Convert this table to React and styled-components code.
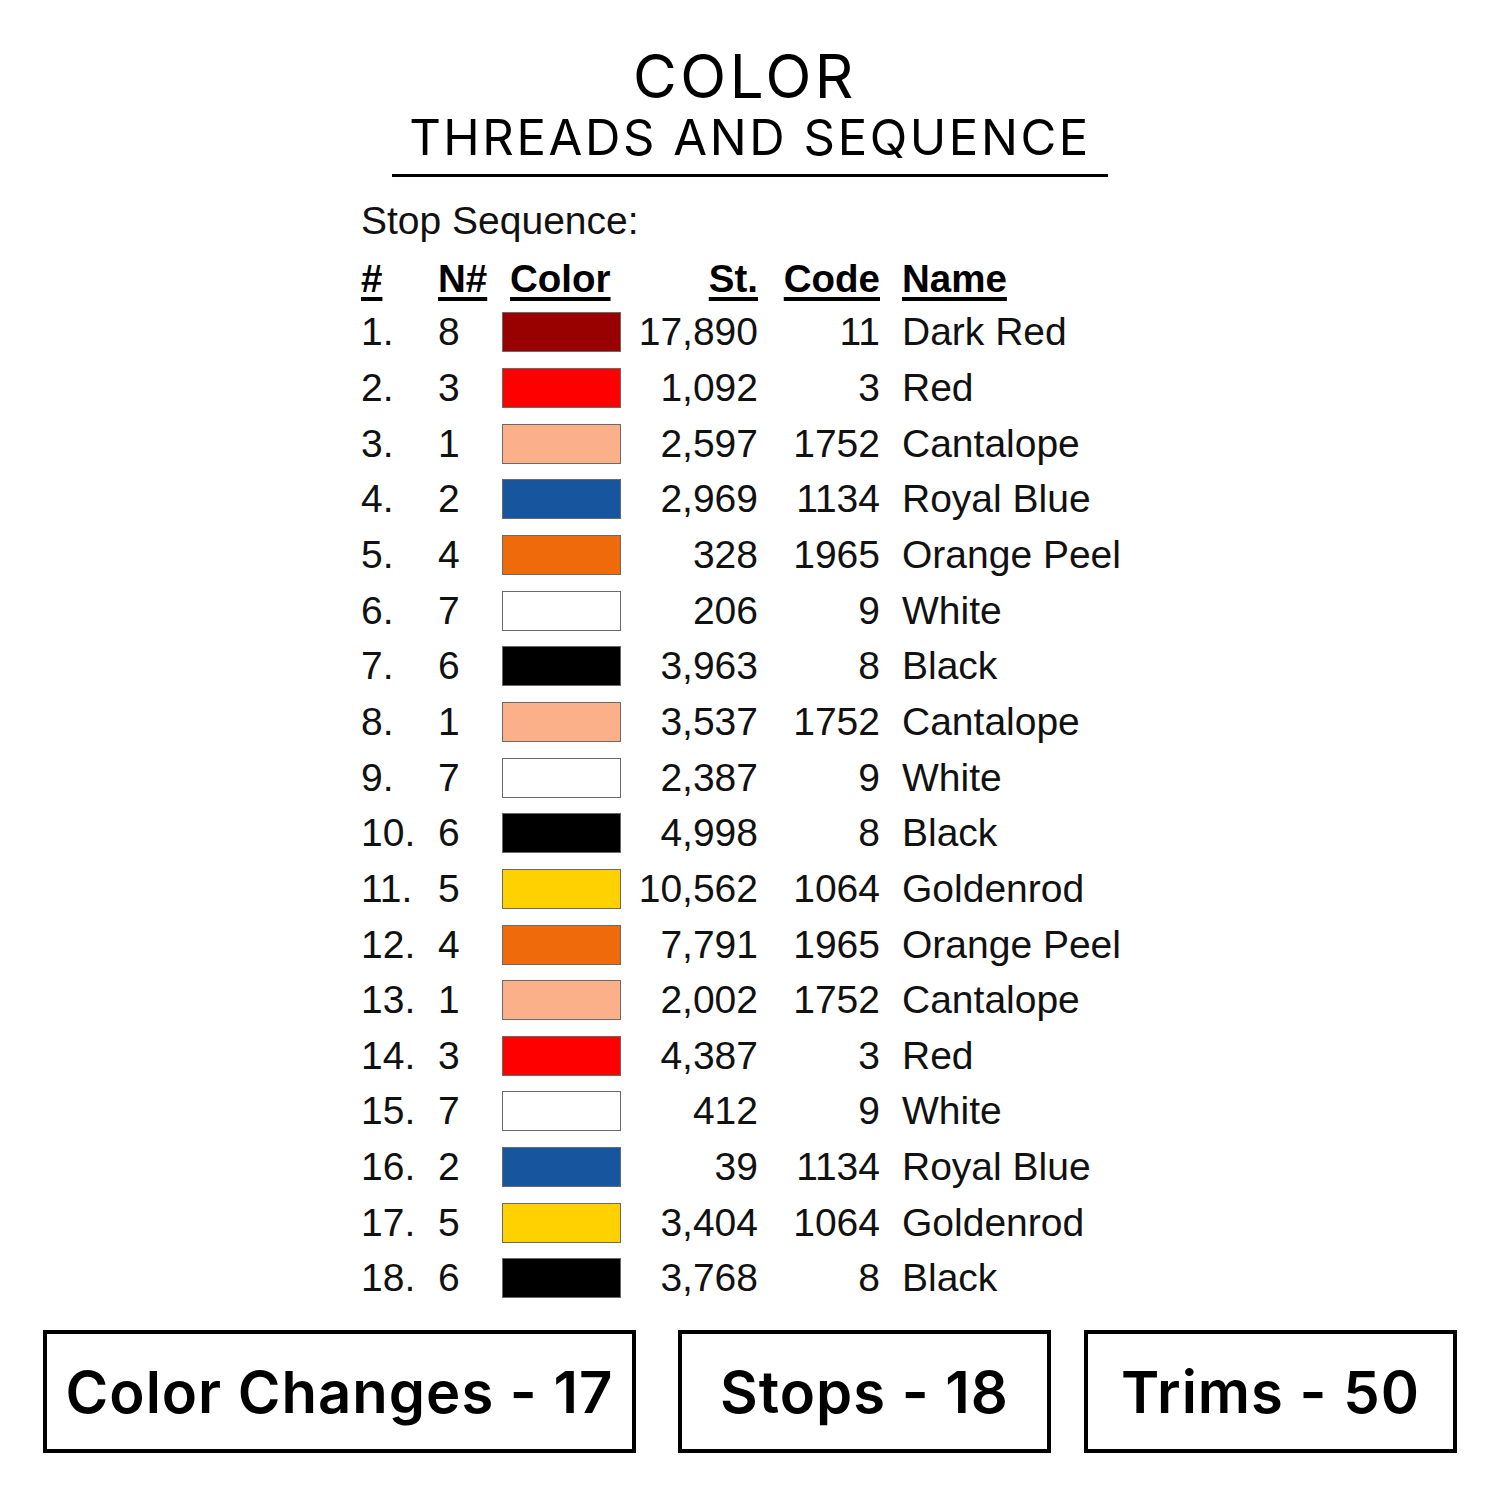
import React from 'react';
import styled, { createGlobalStyle } from 'styled-components';

const GlobalStyle = createGlobalStyle`
  html, body {
    margin: 0;
    padding: 0;
    background: #ffffff;
  }
`;

const stops = [
  { n: 8, color: '#990000', st: '17,890', code: '11', name: 'Dark Red' },
  { n: 3, color: '#ff0000', st: '1,092', code: '3', name: 'Red' },
  { n: 1, color: '#fbb08a', st: '2,597', code: '1752', name: 'Cantalope' },
  { n: 2, color: '#17559f', st: '2,969', code: '1134', name: 'Royal Blue' },
  { n: 4, color: '#ef6a0a', st: '328', code: '1965', name: 'Orange Peel' },
  { n: 7, color: '#ffffff', st: '206', code: '9', name: 'White' },
  { n: 6, color: '#000000', st: '3,963', code: '8', name: 'Black' },
  { n: 1, color: '#fbb08a', st: '3,537', code: '1752', name: 'Cantalope' },
  { n: 7, color: '#ffffff', st: '2,387', code: '9', name: 'White' },
  { n: 6, color: '#000000', st: '4,998', code: '8', name: 'Black' },
  { n: 5, color: '#ffd100', st: '10,562', code: '1064', name: 'Goldenrod' },
  { n: 4, color: '#ef6a0a', st: '7,791', code: '1965', name: 'Orange Peel' },
  { n: 1, color: '#fbb08a', st: '2,002', code: '1752', name: 'Cantalope' },
  { n: 3, color: '#ff0000', st: '4,387', code: '3', name: 'Red' },
  { n: 7, color: '#ffffff', st: '412', code: '9', name: 'White' },
  { n: 2, color: '#17559f', st: '39', code: '1134', name: 'Royal Blue' },
  { n: 5, color: '#ffd100', st: '3,404', code: '1064', name: 'Goldenrod' },
  { n: 6, color: '#000000', st: '3,768', code: '8', name: 'Black' },
];

const totals = [
  { label: 'Color Changes - 17', width: 593, gap: 0 },
  { label: 'Stops - 18', width: 373, gap: 42 },
  { label: 'Trims - 50', width: 373, gap: 33 },
];

export default function App() {
  return (
    <Page>
      <GlobalStyle />
      <Heading>
        <Title>COLOR</Title>
        <Subtitle>THREADS AND SEQUENCE</Subtitle>
      </Heading>

      <Sheet>
        <Caption>Stop Sequence:</Caption>
        <Table>
          <Head>#</Head>
          <Head>N#</Head>
          <Head $pad="8px">Color</Head>
          <Head $align="right">St.</Head>
          <Head $align="right">Code</Head>
          <Head $pad="22px">Name</Head>
          {stops.map((s, i) => (
            <React.Fragment key={i}>
              <Cell>{i + 1}.</Cell>
              <Cell>{s.n}</Cell>
              <Cell>
                <Swatch $color={s.color} />
              </Cell>
              <Cell $align="right">{s.st}</Cell>
              <Cell $align="right">{s.code}</Cell>
              <Cell $pad="22px">{s.name}</Cell>
            </React.Fragment>
          ))}
        </Table>
      </Sheet>

      <Totals>
        {totals.map((t) => (
          <TotalBox key={t.label} $width={t.width} $gap={t.gap}>
            {t.label}
          </TotalBox>
        ))}
      </Totals>
    </Page>
  );
}

const Page = styled.div`
  width: 1500px;
  height: 1500px;
  display: flex;
  flex-direction: column;
  background: #ffffff;
  color: #000000;
  box-sizing: border-box;
  padding-top: 44px;
`;

const Heading = styled.div`
  align-self: center;
  width: 716px;
  display: flex;
  flex-direction: column;
  align-items: center;
  border-bottom: 3px solid #000000;
  font-family: Inter, 'Noto Sans', sans-serif;
  font-weight: 400;
`;

const Title = styled.div`
  font-size: 60px;
  line-height: 64px;
  letter-spacing: 3.5px;
  margin-right: 10px;
`;

const Subtitle = styled.div`
  font-size: 49px;
  line-height: 60px;
  letter-spacing: 2.6px;
  padding-bottom: 6px;
`;

const Sheet = styled.div`
  padding-left: 361px;
  font-family: 'Liberation Sans', Arial, sans-serif;
  margin-top: 22px;
`;

const Caption = styled.div`
  font-size: 39px;
  line-height: 44px;
  color: #111111;
`;

const Table = styled.div`
  display: grid;
  grid-template-columns: 77px 64px 119px 137px 122px auto;
  grid-auto-rows: 55.65px;
  margin-top: 6px;
  align-items: center;
`;

const Head = styled.div`
  font-size: 38.5px;
  font-weight: 700;
  text-align: ${(p) => p.$align || 'left'};
  padding-left: ${(p) => p.$pad || '0'};
  padding-top: 4px;
  text-decoration: underline;
  text-decoration-thickness: 4px;
  text-underline-offset: 5px;
`;

const Cell = styled.div`
  font-size: 39px;
  text-align: ${(p) => p.$align || 'left'};
  padding-left: ${(p) => p.$pad || '0'};
  white-space: nowrap;
  color: #111111;
`;

const Swatch = styled.div`
  width: 119px;
  height: 40px;
  box-sizing: border-box;
  background: ${(p) => p.$color};
  border: 1px solid #6a6a6a;
`;

const Totals = styled.div`
  margin-top: auto;
  margin-bottom: 47px;
  padding-left: 43px;
  display: flex;
`;

const TotalBox = styled.div`
  width: ${(p) => p.$width}px;
  margin-left: ${(p) => p.$gap}px;
  height: 123px;
  box-sizing: border-box;
  border: 4px solid #000000;
  display: flex;
  align-items: center;
  justify-content: center;
  font-family: Inter, 'Noto Sans', sans-serif;
  font-weight: 600;
  font-size: 58px;
  letter-spacing: 1px;
`;
